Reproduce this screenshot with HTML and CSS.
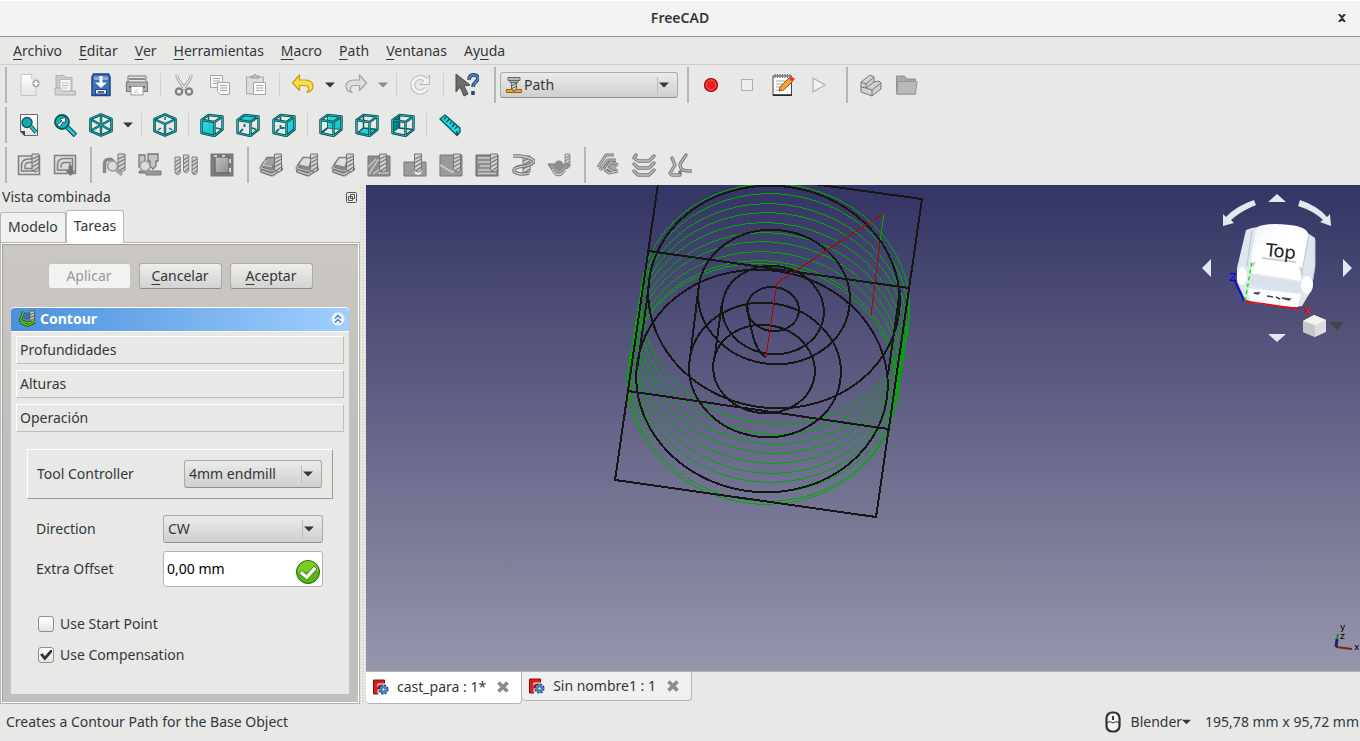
FILE: index.html
```html
<!DOCTYPE html>
<html lang="es">
<head>
<meta charset="utf-8">
<title>FreeCAD</title>
<link rel="stylesheet" href="styles.css">
</head>
<body>
<svg class="defs" aria-hidden="true">
  <defs>
    <linearGradient id="g-grey" x1="0" y1="0" x2="1" y2="1"><stop offset="0" stop-color="#c4c4c4"/><stop offset="1" stop-color="#8c8c8c"/></linearGradient>
    <linearGradient id="g-paper" x1="0" y1="0" x2="0" y2="1"><stop offset="0" stop-color="#fff"/><stop offset="1" stop-color="#e4e4e2"/></linearGradient>
    <linearGradient id="g-teal" x1="0" y1="0" x2="1" y2="1"><stop offset="0" stop-color="#34e0e2"/><stop offset="1" stop-color="#16bcc4"/></linearGradient>
    <linearGradient id="g-dteal" x1="0" y1="0" x2="1" y2="1"><stop offset="0" stop-color="#16a0a4"/><stop offset="1" stop-color="#06686c"/></linearGradient>
    <g id="bit"><path d="M0 0h7v16l-3 2-4-2z" fill="#d2d2d2" stroke="#757575"/><path d="M0 5l7-3M0 9l7-4M0 13l7-4M1 17l6-4" stroke="#757575" stroke-width="1.2"/></g>
    <g id="frame"><path d="M1.500 7v13l13 3V9zM1.500 7l7-5 14 1.500L14.500 9M22.500 3.500v13l-8 6.500" fill="none" stroke="#064a4e" stroke-width="2.400" stroke-linejoin="round"/><path d="M1.500 7v13l13 3V9zM1.500 7l7-5 14 1.500L14.500 9M22.500 3.500v13l-8 6.500" fill="none" stroke="#22acb0" stroke-width="1" stroke-linejoin="round"/></g>
    <g id="iso"><path d="M12 1.500L22.500 6v12L12 22.500 1.500 18V6z" fill="none" stroke="#064a4e" stroke-width="2.600" stroke-linejoin="round"/><path d="M12 1.500L22.500 6v12L12 22.500 1.500 18V6z" fill="none" stroke="#18a0a6" stroke-width="1.200"/></g>
    <g id="layers" stroke-linejoin="round" stroke-linecap="round"><path d="M3 18l10 3.500L22 16" fill="none" stroke="#777" stroke-width="4"/><path d="M3 18l10 3.500L22 16" fill="none" stroke="#bdbdbb" stroke-width="1.600"/><path d="M5 10l-3 5 11 3 9-5" fill="#8f8f8d" stroke="#777" stroke-width="3"/><path d="M5 10l-3 5 11 3 9-5" fill="none" stroke="#c4c4c2" stroke-width="1.200"/></g>
    <symbol id="new" viewBox="0 0 24 24"><path d="M4 1.500h11l4 4v17H4z" fill="url(#g-paper)" stroke="#c4c4c2"/><path d="M14.500 1.500V6H19" fill="#eee" stroke="#cfcfcd"/><circle cx="19" cy="10.500" r="3.700" fill="#a8a8a6"/><path d="M19 8v5M16.500 10.500h5" stroke="#fff" stroke-width="1.600"/></symbol>
    <symbol id="open" viewBox="0 0 24 24"><path d="M3 2.500h8l2 2h6v13H3z" fill="#c9c9c7" stroke="#b2b2b0"/><path d="M7 6.500h11v12H7z" fill="#f6f6f5" stroke="#b8b8b6"/><path d="M9 10h7M9 12.500h7M9 15h5" stroke="#bbb"/><path d="M2 15h5l2 3h13.500v4H2z" fill="#d4d4d2" stroke="#adadab"/></symbol>
    <symbol id="save" viewBox="0 0 24 24"><path d="M4.500 1h15L21 4v18.500H3V4z" fill="#3f6fb5" stroke="#1c4587" stroke-width="1.500"/><path d="M5 3.500h14V7H5z" fill="#87aade"/><path d="M10.500 3h3v6.500H18L12 15 6 9.500h4.500z" fill="#fff"/><rect x="6.500" y="16.500" width="11" height="4.500" fill="#e8eef6" stroke="#1c4587"/><path d="M9 19h6" stroke="#1c3357" stroke-width="1.500"/></symbol>
    <symbol id="print" viewBox="0 0 24 24"><path d="M3 3h18v7H3z" fill="#e6e6e4" stroke="#777"/><path d="M1.500 9h21v9.500h-21z" fill="#b0b0ae" stroke="#7d7d7b" stroke-width="1.200"/><path d="M4 6h16" stroke="#8b8b89" stroke-width="2"/><path d="M4 14h16" stroke="#6a6a68" stroke-width="2"/><path d="M6 13.500h12V22H6z" fill="#fff" stroke="#999"/><path d="M9 17l5 4M9 20l5-4" stroke="#ccc"/></symbol>
    <symbol id="cut" viewBox="0 0 24 24"><path d="M5 2c-1 3 5 10 8.500 14M19 2c1 3-5 10-8.500 14" fill="none" stroke="#8f8f8d" stroke-width="3"/><path d="M5 2c-1 3 5 10 8.500 14M19 2c1 3-5 10-8.500 14" fill="none" stroke="#e8e8e6" stroke-width="1.500"/><circle cx="7" cy="18.500" r="3.200" fill="none" stroke="#808080" stroke-width="2.200"/><circle cx="17" cy="18.500" r="3.200" fill="none" stroke="#808080" stroke-width="2.200"/></symbol>
    <symbol id="copy" viewBox="0 0 24 24"><g fill="#f7f7f6" stroke="#a5a5a3"><path d="M2.500 2.500h12v12h-12z"/><path d="M5 5.500h7M5 8h7M5 10.500h5"/><path d="M9.500 9.500h12v12h-9l-3-3z"/><path d="M12 12.500h7M12 15h7M12 17.500h7"/></g></symbol>
    <symbol id="paste" viewBox="0 0 24 24"><path d="M2.500 4h17v17h-17z" fill="#dcdcda" stroke="#a9a9a7"/><path d="M7 5V3h2.500l1.500-2 1.500 2H15v2z" fill="#c4c4c2" stroke="#999"/><path d="M9.500 9.500h12v12h-12z" fill="#fafaf9" stroke="#a5a5a3"/><path d="M12 12.500h7M12 15h7M12 17.500h7" stroke="#aaa"/></symbol>
    <symbol id="undo" viewBox="0 0 24 24"><path d="M8.500 2v5h6c5 0 7.500 3 7.500 6s-2 5.500-6 6.500c3-3 2-7-2-7H8.500v5L1.500 10z" fill="#f7dd55" stroke="#c4a000" stroke-width="1.200" stroke-linejoin="round"/></symbol>
    <symbol id="redo" viewBox="0 0 24 24"><path d="M15.500 2v5h-6C4.500 7 2 10 2 13s2 5.500 6 6.500c-3-3-2-7 2-7h5.500v5l7-7.500z" fill="#dededc" stroke="#a2a2a0" stroke-width="1.200" stroke-linejoin="round"/></symbol>
    <symbol id="refresh" viewBox="0 0 24 24"><path d="M18.500 15.500A7.300 7.300 0 1 1 18 7.500" fill="none" stroke="#b9b9b7" stroke-width="5"/><path d="M21.500 2v9.500H12z" fill="#ededeb" stroke="#b9b9b7"/><path d="M18.500 15.500A7.300 7.300 0 1 1 18 7.500" fill="none" stroke="#f4f4f2" stroke-width="3"/></symbol>
    <symbol id="help" viewBox="0 0 24 24"><path d="M14 7c0-7 9-6 9-2 0 4-5 4-5 9M18 18v4" fill="none" stroke="#204a87" stroke-width="3.600"/><path d="M14 7c0-7 9-6 9-2 0 4-5 4-5 9" fill="none" stroke="#6b93c6" stroke-width="1.200"/><path d="M1 1l14 11-6 1 4 8-4 2-4-9-4 5z" fill="#6a6d68" stroke="#4a4d49"/></symbol>
    <symbol id="rec" viewBox="0 0 24 24"><circle cx="12" cy="12" r="6.500" fill="#e62222" stroke="#a40000" stroke-width="1.200"/><circle cx="12" cy="12" r="5" fill="none" stroke="#f05a5a"/></symbol>
    <symbol id="stop" viewBox="0 0 24 24"><rect x="6.500" y="6.500" width="11" height="11" fill="#efefee" stroke="#b0b0ae"/></symbol>
    <symbol id="play" viewBox="0 0 24 24"><path d="M6 5l12 7-12 7z" fill="#f3f3f2" stroke="#b0b0ae" stroke-width="1.200"/></symbol>
    <symbol id="edit" viewBox="0 0 24 24"><path d="M2 3h18.500v19.500H2z" fill="#fbfbfa" stroke="#444"/><path d="M2 22h19" stroke="#222" stroke-width="1.500"/><path d="M4 1v4M6.500 1v4M9 1v4M11.500 1v4M14 1v4M16.500 1v4M19 1v4" stroke="#777" stroke-width="1.200"/><path d="M5 8h12M5 11h9M5 14h6M5 17h5" stroke="#aaa"/><path d="M8 18l1.500-4.500L18 5l3.500 3.500-9 8.500z" fill="#f9a13a" stroke="#8f5902"/><path d="M18 5l2-2 4 3-2.500 2.500z" fill="#e03c3c"/></symbol>
    <symbol id="part" viewBox="0 0 24 24"><path d="M3 9l9-7 4 2v5l5-1 2 2v6l-9 7-11-4z" fill="#d0d0ce" stroke="#777" stroke-linejoin="round"/><path d="M3 9l5 2 8-7M8 11v4l6 2 9-7M14 17v6M3 14l5 1 8-6" fill="none" stroke="#777"/></symbol>
    <symbol id="folder" viewBox="0 0 24 24"><path d="M2.500 3h8l2 3h9v15h-19z" fill="#a9a9a7" stroke="#8f8f8d"/><path d="M4 8.500h19L21.500 21H2.500z" fill="#b9b9b7" stroke="#959593"/></symbol>
    <symbol id="caret" viewBox="0 0 10 6"><path d="M0 .5h10L5 5.500z" fill="currentColor"/></symbol>
    <symbol id="fit" viewBox="0 0 24 24"><path d="M3.500 1.500h17v21H7l-3.500-4z" fill="url(#g-paper)" stroke="#666"/><path d="M3 18h5v5z" fill="#444"/><circle cx="10" cy="9.500" r="5" fill="#1aa6b0" stroke="#0a5a60" stroke-width="1.400"/><path d="M14 13.500l5 6" stroke="#064a4e" stroke-width="4"/><path d="M14 13.500l5 6" stroke="#22ccd4" stroke-width="2"/></symbol>
    <symbol id="fitsel" viewBox="0 0 24 24"><path d="M14 14l8.500 8.500" stroke="#064a4e" stroke-width="5"/><path d="M14 14l8 8" stroke="#22ccd4" stroke-width="2.800"/><circle cx="9" cy="9" r="7" fill="#18b2bc" stroke="#0a5a60" stroke-width="1.800"/><path d="M4 12l5-4-2-2 6-2-1 6-2-1-3 5z" fill="#fff" stroke="#063c40" stroke-width=".8"/></symbol>
    <symbol id="axo" viewBox="0 0 24 24"><path d="M12 2v20M2 6.500l20 11M22 6.500l-20 11" stroke="#064a4e" stroke-width="2.400"/><path d="M12 2v20M2 6.500l20 11M22 6.500l-20 11" stroke="#18a0a6" stroke-width="1.200"/><use href="#iso"/></symbol>
    <symbol id="isoview" viewBox="0 0 24 24"><path d="M2 6.500l10 4.500 10-4.500M12 11v11" fill="none" stroke="#064a4e" stroke-width="2.400"/><path d="M2 6.500l10 4.500 10-4.500M12 11v11" fill="none" stroke="#18a0a6" stroke-width="1.200"/><path d="M12 4v3M5 17l3-2M19 17l-3-2" stroke="#087074" stroke-width="1.500"/><use href="#iso"/></symbol>
    <symbol id="vfront" viewBox="0 0 24 24"><path d="M8.500 3v5M21 16l-5-1" stroke="#0a7074" stroke-width="1.500"/><path d="M1.500 7l13 2v14l-13-3z" fill="url(#g-teal)"/><use href="#frame"/></symbol>
    <symbol id="vtop" viewBox="0 0 24 24"><path d="M1.500 7l7-5 14 1.500L14.500 9z" fill="url(#g-teal)"/><path d="M8.500 11v3M4 19l3-3M16 15l4 1.500" stroke="#0a7074" stroke-width="1.800"/><use href="#frame"/></symbol>
    <symbol id="vright" viewBox="0 0 24 24"><path d="M22.500 3.500v13l-8 6.500V9z" fill="url(#g-teal)"/><path d="M8.500 4v4M4 19l3-3M8.500 12v3h4" fill="none" stroke="#0a7074" stroke-width="1.800"/><use href="#frame"/></symbol>
    <symbol id="vrear" viewBox="0 0 24 24"><path d="M8.500 2l14 1.500v13l-14-1.500z" fill="url(#g-teal)" stroke="#0a7074"/><path d="M2 20l6.500-5" stroke="#0a5054" stroke-width="1.800"/><use href="#frame"/></symbol>
    <symbol id="vbottom" viewBox="0 0 24 24"><path d="M1.500 20l7-5 14 1.500-8 6.500z" fill="url(#g-teal)"/><path d="M8.500 2v13l14 1.500M8.500 15l-6 5" fill="none" stroke="#0a5a5e" stroke-width="1.500"/><use href="#frame"/></symbol>
    <symbol id="vleft" viewBox="0 0 24 24"><path d="M1.500 7l7-5v13l-7 5z" fill="url(#g-dteal)"/><path d="M8.500 2v13l14 1.500" fill="none" stroke="#0a5a5e" stroke-width="1.500"/><use href="#frame"/></symbol>
    <symbol id="measure" viewBox="0 0 24 24"><path d="M2 6l5-4 15 13v4l-3 3.500z" fill="#22d4dc" stroke="#065a60" stroke-width="1.300" stroke-linejoin="round"/><path d="M8 4L6 6.500M11 6.500L8.500 9M13.500 9L12 11M16.500 11L14 14M19 13.500L17 16M19 18v4" stroke="#063c40" stroke-width="1.200"/></symbol>
    <symbol id="job" viewBox="0 0 24 24"><path d="M1.500 3h21v18.500h-21z" fill="#dcdcda" stroke="#808080" stroke-width="1.500"/><path d="M4.500 18v-5c0-4 2-7 7-7h8v12zM8 15.500v-2c0-3 2-4 4-4h5v6z" fill="none" stroke="#808080" stroke-width="1.500"/><use href="#bit" x="15" y="1"/></symbol>
    <symbol id="export" viewBox="0 0 24 24"><path d="M1.500 2.500h21v18h-21z" fill="#dcdcda" stroke="#808080" stroke-width="1.500"/><path d="M4.500 17v-5c0-4 2-6.500 7-6.500h8V17zM8 14.500v-1c0-3 2-4 4-4h5v4" fill="none" stroke="#808080" stroke-width="1.500"/><path d="M15.500 12.500h4v5h3L17.500 23l-5-5.500h3z" fill="#777"/></symbol>
    <symbol id="inspect" viewBox="0 0 24 24"><path d="M2.500 20v-9c0-6 8-6 9-1" fill="none" stroke="#888" stroke-width="3.500"/><use href="#bit" x="16" y="1"/><circle cx="10.500" cy="13" r="5" fill="#dcdcda" stroke="#999" stroke-width="1.500"/><path d="M14 17l6 5" stroke="#a5a5a3" stroke-width="3"/></symbol>
    <symbol id="simul" viewBox="0 0 24 24"><path d="M1 2h6v12H1zM10 1h10v7h-2v5l-3 3-3-3V8h-2z" fill="#c5c5c3" stroke="#777" stroke-width="1.300"/><path d="M1 18h22v4H8v-2H1z" fill="#999" stroke="#777"/><circle cx="7" cy="13" r="5" fill="#dcdcda" stroke="#999" stroke-width="1.500"/><path d="M10 17l4 4" stroke="#999" stroke-width="2.500"/></symbol>
    <symbol id="bits" viewBox="0 0 24 24"><use href="#bit" transform="translate(1 4) scale(.75 1)"/><use href="#bit" transform="translate(9.500 2) scale(.75 1)"/><use href="#bit" transform="translate(18 4) scale(.75 1)"/></symbol>
    <symbol id="stock" viewBox="0 0 24 24"><path d="M1.500 1.500h21v21h-21z" fill="#858583" stroke="#777" stroke-width="2"/><path d="M5 4h14v16H5z" fill="url(#g-grey)" stroke="#555"/><path d="M4 3h3M12 3h3M20 6v4M20 15v4" stroke="#eee" stroke-width="1.500"/></symbol>
    <symbol id="contour" viewBox="0 0 24 24"><use href="#layers"/><path d="M8 4.500h9l-3 10-11-2.500z" fill="#a0a09e" stroke="#777" stroke-width="1.500"/><path d="M7 7l-3 5 9 2" fill="none" stroke="#ccc" stroke-width="1.200"/><use href="#bit" x="15.500" y="1"/></symbol>
    <symbol id="pocket" viewBox="0 0 24 24"><use href="#layers"/><path d="M8 4.500h9l-3 10-11-2.500z" fill="#dededc" stroke="#808080" stroke-width="1.500"/><use href="#bit" x="15.500" y="1"/></symbol>
    <symbol id="slab1" viewBox="0 0 24 24"><path d="M1 3h22v20H1z" fill="#8d8d8b" stroke="#777"/><path d="M2 21L11 7h5M6 21l12-9M1 14l8-8M11 20h11" stroke="#c4c4c2" stroke-width="1.500" fill="none"/><use href="#bit" x="12.500" y="1"/></symbol>
    <symbol id="drill" viewBox="0 0 24 24"><path d="M1 9h22v14H1z" fill="#9c9c9a" stroke="#777"/><circle cx="15" cy="18.500" r="3.500" fill="#e3e3e1"/><use href="#bit" x="11.500" y="1"/></symbol>
    <symbol id="slab2" viewBox="0 0 24 24"><path d="M1 2h22v21H1z" fill="#9a9a98" stroke="#777"/><path d="M1 12l12 7 9-5" stroke="#ccc" stroke-width="1.800" fill="none"/><use href="#bit" x="14.500" y="1"/></symbol>
    <symbol id="slab3" viewBox="0 0 24 24"><path d="M1 2h22v21H1z" fill="#8d8d8b" stroke="#666"/><path d="M3 5h18M3 9h14M5 13h16M3 17h18M3 20.500h18" stroke="#c9c9c7" stroke-width="1.600"/><use href="#bit" x="15.500" y="1"/></symbol>
    <symbol id="helix" viewBox="0 0 24 24"><use href="#bit" x="12" y="3"/><path d="M2 3h7c14 2 18 6 9 9-6 2-14 1-15 5s9 5 15 3" fill="none" stroke="#777" stroke-width="3.500"/><path d="M2 3h7c14 2 18 6 9 9-6 2-14 1-15 5s9 5 15 3" fill="none" stroke="#ccc" stroke-width="1.300"/></symbol>
    <symbol id="surface" viewBox="0 0 24 24"><use href="#bit" transform="translate(18 1) scale(.7 .8)"/><path d="M1 11h7c0 7 8 7 9 0h6l-4 5c-3 9-11 8-13 3z" fill="#9b9b99" stroke="#777"/><circle cx="12" cy="12" r="4.500" fill="#8c8c8a"/><path d="M5 16c3 8 11 7 14 0" stroke="#ddd" fill="none"/></symbol>
    <symbol id="dress1" viewBox="0 0 24 24"><path d="M10 7h9l2 11-9 1-5-4z" fill="#a5a5a3"/><path d="M18 2h-8L2 14M20 7h-8L4 17M22 12l-7-3-6 8 4 3 9-2M10 14l8 5 4-1" fill="none" stroke="#777" stroke-width="3" stroke-linejoin="round"/><path d="M18 2h-8L2 14M20 7h-8L4 17M22 12l-7-3-6 8 4 3 9-2M10 14l8 5 4-1" fill="none" stroke="#c4c4c2" stroke-width="1.200"/></symbol>
    <symbol id="dress2" viewBox="0 0 24 24"><g fill="none" stroke-linejoin="round" stroke-linecap="round"><path d="M4 2L2 5l4 3h11l5-5M2 11l4 4h11l5-5M2 18l4 4h11l5-5" stroke="#777" stroke-width="3.300"/><path d="M4 2L2 5l4 3h11l5-5M2 11l4 4h11l5-5M2 18l4 4h11l5-5" stroke="#c4c4c2" stroke-width="1.300"/></g></symbol>
    <symbol id="dress3" viewBox="0 0 24 24"><g fill="none" stroke-linejoin="round" stroke-linecap="round"><path d="M4 5l3 7-5 8 2 2h8v-3M18 2l-6 9c0 6 3 7 11 7" stroke="#777" stroke-width="3.300"/><path d="M4 5l3 7-5 8 2 2h8M18 2l-6 9c0 6 3 7 11 7" stroke="#c4c4c2" stroke-width="1.300"/></g></symbol>
    <symbol id="pathwb" viewBox="0 0 16 16"><path d="M2 .5h12v3H2zM4 3.500h8v2H4z" fill="#b4b8b2" stroke="#666"/><path d="M5.500 5.500h5V12L8 14l-2.500-2z" fill="#d0d3ce" stroke="#666"/><path d="M5 9l6-3M5 12l6-3" stroke="#555"/><path d="M.5 12.500h5l2.500 2 2.500-2h5v3H.5z" fill="#e9a23a" stroke="#9a6510"/></symbol>
    <symbol id="contour-c" viewBox="0 0 18 18"><path d="M5 2L1.500 11l8 3 7-3M2 13l7 3.500 8-4" fill="none" stroke="#1e4a08" stroke-width="3.200" stroke-linejoin="round"/><path d="M5 2L1.500 11l8 3 7-3M2 13l7 3.500 8-4" fill="none" stroke="#5fc41c" stroke-width="1.600"/><path d="M6 3l6-1v8l-7 0z" fill="#3f6fa8"/><path d="M11.500 1h5v10l-2.500 1-2.500-1z" fill="#c8ccc6" stroke="#555"/><path d="M11.500 5l5-2M11.500 8l5-2M12 11l4-2" stroke="#555"/></symbol>
    <symbol id="fc" viewBox="0 0 16 16"><path d="M.5 1h11v4h-2L5 10v5H.5z" fill="#d81e1e" stroke="#8c0a0a"/><path d="M5 5h7M5 5v3M5 10.500v4" stroke="#fff"/><path d="M5 7.500h3" stroke="#8c0a0a"/><circle cx="10.500" cy="10.500" r="4.200" fill="#5b86c4" stroke="#204a87" stroke-width="1.800" stroke-dasharray="2 1.300"/><circle cx="10.500" cy="10.500" r="3.400" fill="#5b86c4"/><circle cx="10.500" cy="10.500" r="1.600" fill="#fff" stroke="#204a87" stroke-width=".8"/></symbol>
    <symbol id="close" viewBox="0 0 14 14"><path d="M2.500 2.500l9 9M11.500 2.500l-9 9" stroke="#8a8d89" stroke-width="3.800"/></symbol>
  </defs>
</svg>

<div class="window">
  <header class="titlebar"><h1>FreeCAD</h1><button class="win-close" aria-label="Cerrar"><svg viewBox="0 0 8 8"><path d="M1 0l3 3.500L7 0M1 8l3-3.500L7 8" fill="none" stroke="#2e3436" stroke-width="2"/></svg></button></header>

  <nav class="menubar">
    <button><u>A</u>rchivo</button><button><u>E</u>ditar</button><button><u>V</u>er</button><button><u>H</u>erramientas</button><button><u>M</u>acro</button><button><u>P</u>ath</button><button><u>V</u>entanas</button><button>Ay<u>u</u>da</button>
  </nav>

  <div class="toolbars">
    <div class="toolrow main">
      <div class="group">
        <button class="tool" aria-label="Nuevo"><svg><use href="#new"/></svg></button><button class="tool" aria-label="Abrir"><svg><use href="#open"/></svg></button><button class="tool" aria-label="Guardar"><svg><use href="#save"/></svg></button><button class="tool" aria-label="Imprimir"><svg><use href="#print"/></svg></button><i class="sep"></i>
        <button class="tool" aria-label="Cortar"><svg><use href="#cut"/></svg></button><button class="tool" aria-label="Copiar"><svg><use href="#copy"/></svg></button><button class="tool" aria-label="Pegar"><svg><use href="#paste"/></svg></button><i class="sep"></i>
        <button class="tool" aria-label="Deshacer"><svg><use href="#undo"/></svg></button><button class="drop" aria-label="Historial de deshacer"><svg><use href="#caret"/></svg></button><button class="tool" aria-label="Rehacer"><svg><use href="#redo"/></svg></button><button class="drop dim" aria-label="Historial de rehacer"><svg><use href="#caret"/></svg></button><i class="sep"></i>
        <button class="tool" aria-label="Refrescar"><svg><use href="#refresh"/></svg></button><i class="sep"></i>
        <button class="tool" aria-label="¿Qué es esto?"><svg><use href="#help"/></svg></button>
      </div>
      <div class="group">
        <span class="combo workbench"><svg class="lead"><use href="#pathwb"/></svg><select aria-label="Entorno de trabajo"><option>Path</option></select><svg class="caret"><use href="#caret"/></svg></span>
      </div>
      <div class="group">
        <button class="tool" aria-label="Grabar macro"><svg><use href="#rec"/></svg></button><button class="tool" aria-label="Detener"><svg><use href="#stop"/></svg></button><button class="tool" aria-label="Macros"><svg><use href="#edit"/></svg></button><button class="tool" aria-label="Ejecutar"><svg><use href="#play"/></svg></button>
      </div>
      <div class="group">
        <button class="tool" aria-label="Pieza"><svg><use href="#part"/></svg></button><button class="tool" aria-label="Grupo"><svg><use href="#folder"/></svg></button>
      </div>
    </div>
    <div class="toolrow">
      <div class="group">
        <button class="tool" aria-label="Ajustar todo"><svg><use href="#fit"/></svg></button><button class="tool" aria-label="Ajustar selección"><svg><use href="#fitsel"/></svg></button><button class="tool" aria-label="Estilo de dibujo"><svg><use href="#axo"/></svg></button><button class="drop" aria-label="Estilos"><svg><use href="#caret"/></svg></button><i class="sep"></i>
        <button class="tool" aria-label="Axonométrica"><svg><use href="#isoview"/></svg></button><i class="sep"></i>
        <button class="tool" aria-label="Alzado"><svg><use href="#vfront"/></svg></button><button class="tool" aria-label="Planta"><svg><use href="#vtop"/></svg></button><button class="tool" aria-label="Derecha"><svg><use href="#vright"/></svg></button><i class="sep"></i>
        <button class="tool" aria-label="Posterior"><svg><use href="#vrear"/></svg></button><button class="tool" aria-label="Inferior"><svg><use href="#vbottom"/></svg></button><button class="tool" aria-label="Izquierda"><svg><use href="#vleft"/></svg></button><i class="sep"></i>
        <button class="tool" aria-label="Medir"><svg><use href="#measure"/></svg></button>
      </div>
    </div>
    <div class="toolrow">
      <div class="group">
        <button class="tool" aria-label="Trabajo"><svg><use href="#job"/></svg></button><button class="tool" aria-label="Exportar"><svg><use href="#export"/></svg></button>
      </div>
      <div class="group">
        <button class="tool" aria-label="Inspeccionar"><svg><use href="#inspect"/></svg></button><button class="tool" aria-label="Simular"><svg><use href="#simul"/></svg></button><button class="tool" aria-label="Herramientas"><svg><use href="#bits"/></svg></button><button class="tool" aria-label="Material"><svg><use href="#stock"/></svg></button>
      </div>
      <div class="group">
        <button class="tool" aria-label="Contorno"><svg><use href="#contour"/></svg></button><button class="tool" aria-label="Perfil de caras"><svg><use href="#pocket"/></svg></button><button class="tool" aria-label="Perfil de bordes"><svg><use href="#pocket"/></svg></button><button class="tool" aria-label="Cajera"><svg><use href="#slab1"/></svg></button><button class="tool" aria-label="Taladrar"><svg><use href="#drill"/></svg></button><button class="tool" aria-label="Grabar"><svg><use href="#slab2"/></svg></button><button class="tool" aria-label="Planear"><svg><use href="#slab3"/></svg></button><button class="tool" aria-label="Hélice"><svg><use href="#helix"/></svg></button><button class="tool" aria-label="Superficie"><svg><use href="#surface"/></svg></button>
      </div>
      <div class="group">
        <button class="tool" aria-label="Copia"><svg><use href="#dress1"/></svg></button><button class="tool" aria-label="Matriz"><svg><use href="#dress2"/></svg></button><button class="tool" aria-label="Copia simple"><svg><use href="#dress3"/></svg></button>
      </div>
    </div>
  </div>

  <main class="work">
    <aside class="dock">
      <div class="dock-title"><span>Vista combinada</span><button aria-label="Desacoplar"><svg viewBox="0 0 11 11"><rect x=".5" y=".5" width="10" height="10" rx="1" fill="none" stroke="#555"/><path d="M4.500 2.500h4v4h-4zM2.500 4.500h4v4h-4z" fill="none" stroke="#555"/></svg></button></div>
      <div class="tabs" role="tablist"><button role="tab">Modelo</button><button role="tab" class="active" aria-selected="true">Tareas</button></div>
      <div class="pane">
        <div class="tasks">
          <div class="actions"><button disabled>Aplicar</button><button><u>C</u>ancelar</button><button><u>A</u>ceptar</button></div>
          <section class="card">
            <h2><svg class="ico"><use href="#contour-c"/></svg><span>Contour</span><button aria-label="Plegar"><svg viewBox="0 0 14 14"><circle cx="7" cy="7" r="6.500" fill="#eef3f8"/><path d="M4 6.500L7 3.500l3 3M4 10.500l3-3 3 3" fill="none" stroke="#3b82d0" stroke-width="1.400"/></svg></button></h2>
            <div class="card-body">
              <button class="fold">Profundidades</button><button class="fold">Alturas</button><button class="fold">Operación</button>
              <div class="toolbox"><label for="tc">Tool Controller</label><span class="combo"><select id="tc"><option>4mm endmill</option></select><svg class="caret"><use href="#caret"/></svg></span></div>
              <div class="form">
                <label for="dir">Direction</label><span class="combo"><select id="dir"><option>CW</option></select><svg class="caret"><use href="#caret"/></svg></span>
                <label for="off">Extra Offset</label><span class="field"><input id="off" type="text" value="0,00 mm"><svg viewBox="0 0 24 24"><circle cx="12" cy="12" r="11.500" fill="#58b510" stroke="#2a5a20"/><path d="M1.500 12a10.500 10.500 0 0 1 21-1z" fill="#76cf22"/><path d="M3 13.500l3-3 4.500 4 7.500-8.500 3 3L11 20z" fill="#f4f4f2" stroke="#3a6a18" stroke-width=".8"/></svg></span>
              </div>
              <div class="checks">
                <label><input type="checkbox">Use Start Point</label>
                <label><input type="checkbox" checked>Use Compensation</label>
              </div>
            </div>
          </section>
        </div>
      </div>
    </aside>
    <div class="splitter"></div>
    <section class="docs">
      <svg class="view" viewBox="366 185 994 486" preserveAspectRatio="xMaxYMin slice" role="img" aria-label="Vista 3D">
        <defs>
          <linearGradient id="sky" x1="0" y1="0" x2="0" y2="1"><stop offset="0" stop-color="#343465"/><stop offset="1" stop-color="#9696ab"/></linearGradient>
          <linearGradient id="face" x1="0" y1="0" x2="1" y2="1"><stop offset="0" stop-color="#eef2f6"/><stop offset=".4" stop-color="#fff"/><stop offset="1" stop-color="#fff"/></linearGradient>
        </defs>
        <rect x="366" y="185" width="994" height="486" fill="url(#sky)"/>
        <g class="wire green">
          <ellipse cx="775" cy="304" rx="135" ry="120" transform="rotate(8 775 304)"/>
          <ellipse cx="774" cy="314" rx="135" ry="120" transform="rotate(8 774 314)"/>
          <ellipse cx="772" cy="324" rx="135" ry="120" transform="rotate(8 772 324)"/>
          <ellipse cx="771" cy="333" rx="135" ry="120" transform="rotate(8 771 333)"/>
          <ellipse cx="769" cy="343" rx="135" ry="120" transform="rotate(8 769 343)"/>
          <ellipse cx="768" cy="353" rx="135" ry="120" transform="rotate(8 768 353)"/>
          <ellipse cx="766" cy="362" rx="135" ry="120" transform="rotate(8 766 362)"/>
          <ellipse cx="765" cy="372" rx="135" ry="120" transform="rotate(8 765 372)"/>
          <ellipse cx="763" cy="381" rx="135" ry="120" transform="rotate(8 763 381)"/>
          <ellipse cx="762" cy="384" rx="135" ry="120" transform="rotate(8 762 384)"/>
          <path d="M884 213L880 242"/>
        </g>
        <g class="wire black">
          <path d="M661 163L922 199 876 517 615 480zM649 251L909 288M628 391L888 429M649 285L637 370M900 290L888 375"/>
          <ellipse cx="774" cy="297" rx="126" ry="111" transform="rotate(8 774 297)"/>
          <ellipse cx="762" cy="381" rx="126" ry="111" transform="rotate(8 762 381)"/>
          <ellipse cx="774" cy="297" rx="76" ry="67" transform="rotate(8 774 297)"/>
          <ellipse cx="765" cy="370" rx="76" ry="67" transform="rotate(8 765 370)"/>
          <ellipse cx="773" cy="310" rx="51" ry="44" transform="rotate(8 773 310)"/>
          <ellipse cx="764" cy="369" rx="51" ry="44" transform="rotate(8 764 369)"/>
          <ellipse cx="773" cy="309" rx="26" ry="22" transform="rotate(8 773 309)"/>
          <path d="M699 284L690 358M722 302L714 362M747 304C750 325 754 352 766 357"/>
        </g>
        <path class="wire red" d="M871 315L880 242M884 213L777 283 766 357"/>
        <g fill="#e2e8f0">
          <path d="M1268 202l9-8 9 8zM1268 334l9 8 9-8zM1211 259v18l-9-9zM1343 259v18l9-9z"/>
          <path d="M1254 200q-18 6-28 17l-3-3v12l11-3-3-3q10-9 25-15zM1300 200q18 6 27 17l3-3 1 12-11-4 3-2q-9-9-25-14z"/>
        </g>
        <g>
          <path d="M1252 228l-6 2-9 38v14l8 17 8 4 40 4 9-1 9-15 4-22V238l-12-8-32-5z" fill="#dfe6ee"/>
          <path d="M1252 230l-5 36M1309 236l-8 40M1315 240v26l-3 18" fill="none" stroke="#b9c3d6"/>
          <path d="M1256 228q8-6 34-3 17 2 18 9l-6 35q-1 6-6 5l-39-7q-7-2-6-8z" fill="url(#face)"/>
          <path d="M1262 258l34 4M1255 262l-4 6M1300 267l3 8" fill="none" stroke="#c9d0dc" stroke-width="2"/>
          <path d="M1251 266l50 8v7l-50-8z" fill="#fff"/><path d="M1251 275l49 8-1 10-50-8z" fill="#d9e1ea"/><path d="M1248 288l53 6-3 13q-20 0-45-5-5-4-5-14z" fill="#fbfcff"/>
          <ellipse cx="1242" cy="276" rx="5" ry="9" fill="#fff"/><ellipse cx="1307" cy="285" rx="6" ry="9" fill="#fff"/>
          <path d="M1254 293h5l-1 1zM1267 296l6 1M1276 297l4 2M1282 298l8 1-1 1z" fill="#444" stroke="#444" stroke-width="1.500"/>
          <text class="cube-label" x="1265" y="256" transform="rotate(6 1265 256)">Top</text>
          <path d="M1244 301L1299 309" stroke="#f00" stroke-width="1.500"/><path d="M1245 301L1252 262" stroke="#0e0" stroke-dasharray="4 3" stroke-width="1.500"/><path d="M1244 301l-10-22" stroke="#00f" stroke-width="1.500"/>
          <text class="axis" x="1229" y="281" fill="#00f">Z</text><text class="axis" x="1303" y="315" fill="#f00">X</text>
        </g>
        <path d="M1303 321l11-6 12 5v12l-11 5-12-5z" fill="#ddd"/><path d="M1303 321l12 4v12l-12-5z" fill="#c8c8c8"/><path d="M1303 321l11-6 12 5-11 5z" fill="#f2f2f2"/>
        <path d="M1329 322h15l-7 8z" fill="#444"/>
        <g fill="none" stroke-width="2"><path d="M1336 647l16 2" stroke="#8a1c1c"/><path d="M1336 647l1-8" stroke="#1c1c8a" stroke-width="3"/><path d="M1337 639l1-5" stroke="#1c8a1c"/></g>
        <text class="tri" x="1354" y="650">x</text><text class="tri" x="1340" y="630">y</text><text class="tri" x="1340" y="639">z</text>
      </svg>
      <div class="doctabs" role="tablist">
        <div class="doctab active" role="tab" aria-selected="true"><svg class="ico"><use href="#fc"/></svg><span>cast_para : 1*</span><button aria-label="Cerrar cast_para"><svg><use href="#close"/></svg></button></div>
        <div class="doctab" role="tab"><svg class="ico"><use href="#fc"/></svg><span>Sin nombre1 : 1</span><button aria-label="Cerrar Sin nombre1"><svg><use href="#close"/></svg></button></div>
      </div>
    </section>
  </main>

  <footer class="status"><span class="msg">Creates a Contour Path for the Base Object</span>
    <button class="navstyle"><svg class="mouse" viewBox="0 0 16 22"><rect x="1.500" y="1.500" width="13" height="19" rx="5.500" fill="#f4f4f3" stroke="#2e3436" stroke-width="2.200"/><path d="M2 12q2-2 4-1 2 2 4 0 2-1 4 1" fill="none" stroke="#2e3436" stroke-width="1"/><rect x="7" y="5" width="2" height="4" fill="#2e3436"/></svg><span>Blender</span><svg class="tiny"><use href="#caret"/></svg></button><span>195,78 mm x 95,72 mm</span></footer>
</div>
</body>
</html>
```
FILE: styles.css
```css
* { box-sizing: border-box; }
html, body { height: 100%; margin: 0; }
body { font-family: "Noto Sans", "Open Sans", sans-serif; font-size: 14px; line-height: 20px; color: #32383a; background: #e8e8e6; }
button, select, input { font: inherit; color: inherit; margin: 0; }
button { background: none; border: 0; padding: 0; }
u { text-decoration: underline; text-underline-offset: 3px; }
svg { display: block; }
.defs { position: absolute; width: 0; height: 0; }
.window { display: flex; flex-direction: column; height: 100%; overflow: hidden; }

.titlebar { display: flex; align-items: center; justify-content: center; position: relative; height: 37px; padding-bottom: 2px; background: #f3f3f3; border-top: 1px solid #fff; border-bottom: 1px solid #94958b; flex: none; }
.titlebar h1 { margin: 0; font-size: 14px; font-weight: 600; }
.win-close { position: absolute; right: 14px; }
.win-close svg { width: 8px; height: 8px; }

.menubar { display: flex; gap: 17px; height: 28px; padding: 0 13px; align-items: center; border-bottom: 1px solid #cfcfcc; flex: none; }

.toolbars { flex: none; }
.toolrow { display: flex; height: 40px; }
.group { display: flex; align-items: center; padding-right: 2px; }
.main .group { padding-right: 4px; }
.group::before { content: ""; width: 2px; height: 36px; margin: 0 4px 0 5px; background: #b6b6b4; }
.tool { width: 36px; height: 36px; display: grid; place-items: center; }
.tool svg { width: 24px; height: 24px; }
.drop { width: 17px; height: 36px; display: grid; place-items: center; }
.drop svg { width: 10px; height: 6px; }
.dim { color: #8b8e8c; }
.sep { width: 1px; height: 24px; margin: 0 5px; background: #d0d0ce; }

.combo { position: relative; display: block; }
.combo select { appearance: none; width: 100%; height: 28px; padding: 0 30px 0 4px; border: 1px solid #aaaaa7; border-bottom-color: #8e8e8b; border-radius: 3px; background: linear-gradient(#ebebe9, #cfcfcd); line-height: 20px; }
.combo::after { content: ""; position: absolute; right: 20px; top: 5px; bottom: 5px; width: 1px; background: #bcbcba; }
.caret { position: absolute; right: 9px; top: 11px; width: 10px; height: 6px; pointer-events: none; }
.workbench { width: 178px; }
.workbench select { height: 26px; padding-left: 23px; }
.workbench .caret { top: 10px; }
.lead { position: absolute; left: 6px; top: 5px; width: 16px; height: 16px; }

.work { display: flex; flex: 1; min-height: 0; }
.dock { width: 360px; flex: none; display: flex; flex-direction: column; }
.splitter { width: 6px; flex: none; background: radial-gradient(circle, #fafafa 35%, #deddda 50%) 0 0 / 3px 3px; }
.dock-title { display: flex; justify-content: space-between; align-items: center; height: 24px; padding: 0 3px 0 2px; }
.dock-title svg { width: 11px; height: 11px; }
.tabs { display: flex; align-items: flex-end; height: 33px; }
.tabs button { height: 30px; padding: 0 7px 2px; background: #f0f0f0; border: 1px solid #b9b9b6; border-bottom: 0; border-radius: 3px 3px 0 0; }
.tabs .active { position: relative; height: 33px; margin-bottom: -1px; background: #fff; }
.pane { flex: 1; display: flex; border: 1px solid #b4b4b1; background: #fff; padding: 1px; }
.tasks { flex: 1; border: 1px solid #9d9d9a; border-right: 0; border-bottom: 0; background: linear-gradient(#cbc7c3, #c0c0be 40%); padding: 18px 9px 8px 8px; display: flex; flex-direction: column; }
.actions { display: flex; justify-content: center; gap: 8px; margin-bottom: 18px; }
.actions button { width: 83px; height: 26px; border: 1px solid #a9a9a5; border-bottom-color: #8b8b88; border-radius: 3px; background: linear-gradient(#ededeb, #d3d3d1); }
.actions button:disabled { color: #96999a; background: #f2f2f1; border-color: #c3c3c0; }
.card { flex: 1; display: flex; flex-direction: column; }
.card h2 { display: flex; align-items: center; gap: 4px; height: 25px; margin: 0; padding: 0 4px 2px 8px; font-size: 14px; font-weight: 700; color: #fff; background: linear-gradient(90deg, #4a90dc, #a0cfff); border: 1px solid #fff; border-width: 1px 0; border-radius: 4px 4px 0 0; }
.card h2 span { flex: 1; }
.card h2 .ico { width: 17px; height: 17px; }
.card h2 button svg { width: 14px; height: 14px; }
.card-body { flex: 1; background: #e8e8e6; padding: 4px 5px; }
.fold { display: block; width: 100%; height: 28px; margin-bottom: 6px; padding: 0 3px; text-align: left; border: 1px solid; border-color: #fff #bdbdbb #bdbdbb #fff; }
.toolbox { display: flex; align-items: center; justify-content: space-between; height: 50px; margin: 17px 11px 16px; padding: 0 10px 0 9px; border: 1px solid; border-color: #fff #9b9b98 #9b9b98 #fff; }
.toolbox .combo { width: 138px; }
.form { display: grid; grid-template-columns: 127px 1fr; gap: 8px 0; align-items: center; margin: 0 21px 0 20px; }
.field { position: relative; display: block; }
.field input { width: 100%; height: 36px; padding: 0 30px 2px 3px; border: 1px solid #b4b4b1; border-radius: 3px; background: #fff; color: #000; }
.field svg { position: absolute; right: 3px; bottom: 3px; width: 24px; height: 24px; }
.checks { display: grid; gap: 11px; margin: 27px 22px 0; }
.checks label { display: flex; align-items: center; gap: 6px; }
.checks input { appearance: none; width: 16px; height: 16px; border: 1px solid #8e8e8b; border-radius: 3px; background: linear-gradient(#fff, #e4e4e2); display: grid; place-items: center; }
.checks input:checked::before { content: ""; width: 12px; height: 10px; background: #2e3436; clip-path: polygon(0 45%, 22% 32%, 40% 62%, 85% 0, 100% 0, 100% 22%, 45% 100%, 36% 100%); }

.docs { flex: 1; min-width: 0; display: flex; flex-direction: column; }
.view { flex: 1; min-height: 0; width: 100%; }
.wire { fill: none; shape-rendering: crispEdges; }
.green { stroke: #0a0; stroke-width: 1; }
.black { stroke: #161616; stroke-width: 2; }
.red { stroke: #b40000; stroke-width: 1; }
.cube-label { font: 18px "DejaVu Sans", sans-serif; fill: #222; }
.axis { font: 11px "DejaVu Sans", sans-serif; }
.tri { font: 9px "DejaVu Sans", sans-serif; fill: #000; }
.doctabs { display: flex; align-items: flex-start; height: 33px; flex: none; border-top: 1px solid #b4b4b1; }
.doctab { display: flex; align-items: center; height: 29px; padding: 0 11px 0 7px; background: #f0f0f0; border: 1px solid #b4b4b1; border-top: 0; border-left: 0; border-radius: 0 0 4px 4px; }
.doctab.active { height: 32px; padding-bottom: 2px; background: #fff; }
.doctab .ico { width: 16px; height: 16px; margin-right: 8px; }
.doctab span { margin-right: 10px; }
.doctab button svg { width: 14px; height: 14px; }

.status { display: flex; align-items: center; height: 37px; padding: 0 1px 2px 6px; flex: none; white-space: nowrap; }
.msg { flex: 1; }
.navstyle { display: flex; align-items: center; margin-right: 14px; }
.mouse { width: 16px; height: 22px; margin-right: 10px; }
.tiny { width: 9px; height: 6px; }
```
